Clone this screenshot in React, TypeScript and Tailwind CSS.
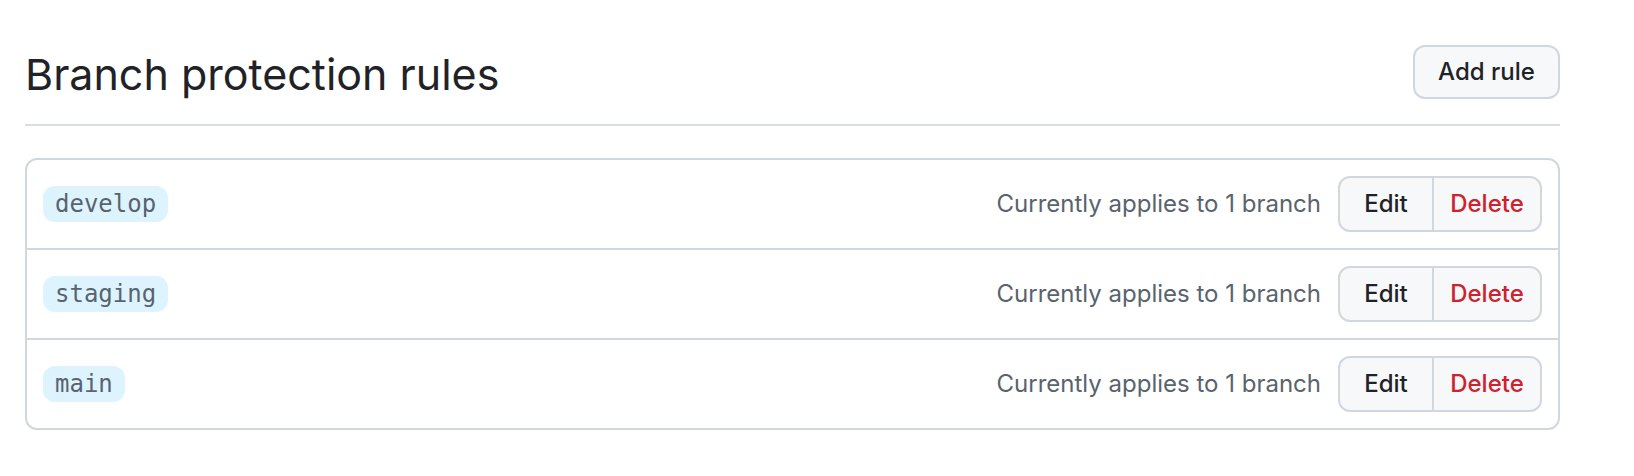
import React from "react"

interface Rule {
  name: string
  count: number
}

const rules: Rule[] = [
  { name: "develop", count: 1 },
  { name: "staging", count: 1 },
  { name: "main", count: 1 },
]

const RuleRow: React.FC<{ rule: Rule; first: boolean }> = ({ rule, first }) => {
  return (
    <div
      className={`flex items-center justify-between px-4 py-4 ${
        first ? "" : "border-t-2 border-[#d0d7de]"
      }`}>
      <span className="flex items-center h-[36px] px-3 rounded-[12px] bg-[#ddf4ff] text-[#59636e] text-[24px] font-['DejaVu_Sans_Mono',monospace]">
        {rule.name}
      </span>
      <div className="flex items-center gap-[17px]">
        <span className="text-[24px] text-[#59636e]">
          Currently applies to {rule.count} branch
        </span>
        <div className="flex h-[56px] border-2 border-[#d0d7de] rounded-[12px] overflow-hidden bg-[#f6f8fa] text-[24px] font-medium">
          <button className="w-[94px] border-r-2 border-[#d0d7de] text-[#1f2328]">
            Edit
          </button>
          <button className="w-[106px] text-[#cf222e]">Delete</button>
        </div>
      </div>
    </div>
  )
}

export default function App() {
  return (
    <div className="min-h-screen bg-white font-['Inter',sans-serif]">
      <div className="pl-[25px] pt-[45px] w-[1560px]">
        <div className="flex items-center justify-between pb-[25px] border-b-2 border-[#d8dee4]">
          <h2 className="pt-[4px] text-[43px] leading-[50px] font-normal text-[#1f2328]">
            Branch protection rules
          </h2>
          <button className="h-[54px] w-[147px] border-2 border-[#d0d7de] rounded-[12px] bg-[#f6f8fa] text-[24px] font-medium text-[#1f2328]">
            Add rule
          </button>
        </div>
        <div className="mt-[32px] border-2 border-[#d0d7de] rounded-[12px]">
          {rules.map((r, i) => (
            <RuleRow key={r.name} rule={r} first={i === 0} />
          ))}
        </div>
      </div>
    </div>
  )
}
